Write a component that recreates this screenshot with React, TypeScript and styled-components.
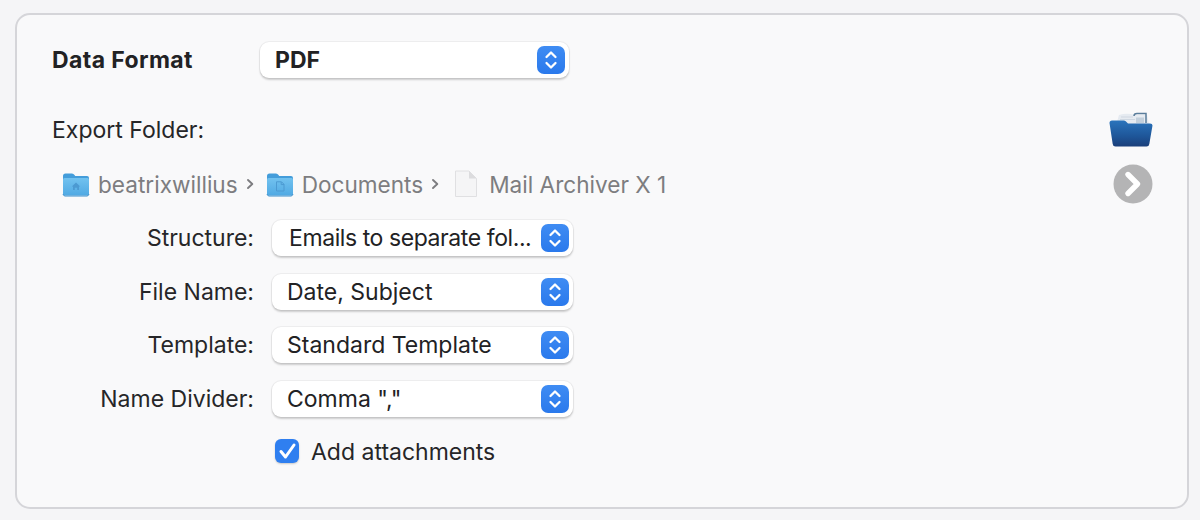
import React from "react";
import styled, { createGlobalStyle } from "styled-components";

const Global = createGlobalStyle`
  html, body { margin: 0; padding: 0; width: 1200px; height: 520px; overflow: hidden; background: #f5f5f7; }
  body { font-family: Inter, "Liberation Sans", sans-serif; -webkit-font-smoothing: antialiased; }
`;

const Page = styled.div`
  width: 1200px;
  height: 520px;
  box-sizing: border-box;
  padding: 13px 11px 11px 15px;
  display: flex;
`;

const Panel = styled.section`
  flex: 1;
  box-sizing: border-box;
  background: #f9f9fa;
  border: 2px solid #d5d5d9;
  border-radius: 15px;
  padding: 27px 34px 0 35px;
  display: flex;
  flex-direction: column;
`;

const TopRow = styled.div`
  display: flex;
  align-items: center;
  height: 36px;
`;

const Heading = styled.div`
  width: 208px;
  font-size: 23px;
  line-height: 34px;
  height: 35px;
  font-weight: 700;
  letter-spacing: 0.4px;
  color: #222224;
`;

const SelectBox = styled.div<{ $width: number; $indent: number; $bold?: boolean; $tight?: boolean }>`
  width: ${(p) => p.$width}px;
  height: 36px;
  box-sizing: border-box;
  padding: 0 4px 0 ${(p) => p.$indent}px;
  display: flex;
  align-items: center;
  justify-content: space-between;
  background: #fff;
  border-radius: 9px;
  box-shadow: 0 0 0 1px rgba(0, 0, 0, 0.04), 0 1.5px 2px rgba(0, 0, 0, 0.18);
  font-size: 23px;
  font-weight: ${(p) => (p.$bold ? 700 : 400)};
  letter-spacing: ${(p) => (p.$tight ? "-0.42px" : "0")};
  color: #222224;
  white-space: nowrap;
`;

const Stepper = styled.span`
  flex: none;
  width: 28px;
  height: 28px;
  border-radius: 7px;
  background: linear-gradient(#3f8cf3, #2a79ec);
  display: flex;
  align-items: center;
  justify-content: center;
`;

const ExportRow = styled.div`
  margin-top: 30px;
  height: 44px;
  display: flex;
  align-items: center;
  justify-content: space-between;
`;

const PlainLabel = styled.div`
  font-size: 23px;
  color: #262628;
`;

const PathRow = styled.div`
  margin-top: 12px;
  height: 40px;
  display: flex;
  align-items: center;
  justify-content: space-between;
`;

const Crumbs = styled.div`
  display: flex;
  align-items: center;
  padding-left: 10px;
  font-size: 22.6px;
  color: #7d7d80;
`;

const CrumbIcon = styled.svg<{ $gap: number }>`
  flex: none;
  margin-right: ${(p) => p.$gap}px;
`;

const Chevron = styled.svg<{ $after: number }>`
  flex: none;
  margin: 0 ${(p) => p.$after}px 0 8px;
`;

const FormGrid = styled.div`
  margin-top: 16px;
  display: grid;
  grid-template-columns: 202px 301px;
  column-gap: 18px;
  row-gap: 17.5px;
  align-items: center;
`;

const FieldLabel = styled.div`
  text-align: right;
  font-size: 23px;
  color: #262628;
`;

const CheckRow = styled.div`
  grid-column: 2;
  display: flex;
  align-items: center;
  gap: 12px;
  padding-left: 3px;
  height: 36px;
  font-size: 23px;
  color: #262628;
`;

const CheckBox = styled.span`
  width: 24px;
  height: 24px;
  margin-top: -3px;
  border-radius: 6px;
  background: #2f7ff0;
  box-shadow: 0 1px 2px rgba(0, 0, 0, 0.2);
  display: flex;
  align-items: center;
  justify-content: center;
`;

const StepperIcon = () => (
  <Stepper>
    <svg width="16" height="22" viewBox="0 0 16 22" fill="none" stroke="#fff" strokeWidth="2.3" strokeLinecap="round" strokeLinejoin="round">
      <path d="M3.5 8 L8 3.5 L12.5 8" />
      <path d="M3.5 14 L8 18.5 L12.5 14" />
    </svg>
  </Stepper>
);

const BlueFolder = ({ glyph }: { glyph: "home" | "doc" }) => (
  <CrumbIcon $gap={8} width="28" height="26" viewBox="0 0 28 26">
    <defs>
      <linearGradient id={`f-${glyph}`} x1="0" y1="0" x2="0" y2="1">
        <stop offset="0" stopColor="#72c2ef" />
        <stop offset="1" stopColor="#50a9e3" />
      </linearGradient>
    </defs>
    <path d="M1 5 Q1 2.5 3.5 2.5 H10 Q11.5 2.5 12.5 4 L13.2 5 H25 Q27 5 27 7 V10 H1 Z" fill="#449dda" />
    <path d="M1 8.5 Q1 7 2.5 7 H25.5 Q27 7 27 8.5 V22.5 Q27 24.5 25 24.5 H3 Q1 24.5 1 22.5 Z" fill={`url(#f-${glyph})`} />
    <path d="M1 23 Q1.5 25 3 25 H25 Q26.5 25 27 23" fill="none" stroke="#3a8fcc" strokeWidth="1" />
    {glyph === "home" ? (
      <path d="M14 11.5 L18.2 15.5 H17 V19 H15.2 V16.8 H12.8 V19 H11 V15.5 H9.8 Z" fill="#4c9ad2" />
    ) : (
      <path d="M10.5 10.8 H15.5 L18 13.3 V20 H10.5 Z M15.2 11 V13.6 H18" fill="none" stroke="#4c9ad2" strokeWidth="1" />
    )}
  </CrumbIcon>
);

const ChevronIcon = ({ after }: { after: number }) => (
  <Chevron $after={after} width="9" height="14" viewBox="0 0 9 14" fill="none" stroke="#7d7d80" strokeWidth="1.9" strokeLinecap="round" strokeLinejoin="round">
    <path d="M2 3 L6.3 7 L2 11" />
  </Chevron>
);

const FileIcon = () => (
  <CrumbIcon $gap={11} width="24" height="28" viewBox="0 0 24 28">
    <path d="M1.5 1 H15 L22.5 8.5 V26.5 H1.5 Z" fill="#f5f5f6" stroke="#e0e0e2" strokeWidth="1" strokeLinejoin="round" />
    <path d="M15 1 V8.5 H22.5 Z" fill="#dcdcde" />
  </CrumbIcon>
);

const OpenFolder = () => (
  <svg width="44" height="36" viewBox="0 0 44 36">
    <defs>
      <linearGradient id="open-f" x1="0" y1="0" x2="0" y2="1">
        <stop offset="0" stopColor="#2a74bc" />
        <stop offset="0.6" stopColor="#1e5699" />
        <stop offset="1" stopColor="#1b3f7a" />
      </linearGradient>
    </defs>
    <path d="M8 10 L10 3 Q18 0.5 26 3 L38 3 L40 12 H8 Z" fill="#e6ebf1" />
    <path d="M12 5 H24 M11 7.5 H26" stroke="#cfd8e2" strokeWidth="1.2" fill="none" />
    <path d="M25 4 Q25 1.5 28 1.5 H37 V11" fill="none" stroke="#5a7d9b" strokeWidth="1.5" />
    <path d="M27 5.5 H35 V11 H27 Z" fill="#c3d0dc" />
    <path d="M0.5 11 Q0.5 8.5 3 8.5 H15 Q16.5 8.5 17.5 10 L19 11.5 H41 Q43.5 11.5 43.5 13.5 L40.3 32 Q40 34.5 37.5 34.5 H6.5 Q4 34.5 3.7 32 Z" fill="url(#open-f)" />
  </svg>
);

const GoButton = () => (
  <svg width="40" height="40" viewBox="0 0 40 40">
    <circle cx="20" cy="20" r="19.5" fill="#b4b4b5" />
    <path d="M15 10.5 L24.5 20 L15 29.5" fill="none" stroke="#fff" strokeWidth="5.4" strokeLinecap="round" strokeLinejoin="round" />
  </svg>
);

const fields = [
  { label: "Structure:", value: "Emails to separate fol...", indent: 17, tight: true },
  { label: "File Name:", value: "Date, Subject", indent: 15, tight: false },
  { label: "Template:", value: "Standard Template", indent: 15, tight: false },
  { label: "Name Divider:", value: 'Comma ","', indent: 15, tight: false },
];

export default function App() {
  return (
    <>
      <Global />
      <Page>
        <Panel>
          <TopRow>
            <Heading>Data Format</Heading>
            <SelectBox $width={309} $indent={15} $bold>
              PDF
              <StepperIcon />
            </SelectBox>
          </TopRow>
          <ExportRow>
            <PlainLabel>Export Folder:</PlainLabel>
            <OpenFolder />
          </ExportRow>
          <PathRow>
            <Crumbs>
              <BlueFolder glyph="home" />
              beatrixwillius
              <ChevronIcon after={11} />
              <BlueFolder glyph="doc" />
              Documents
              <ChevronIcon after={14} />
              <FileIcon />
              Mail Archiver X 1
            </Crumbs>
            <GoButton />
          </PathRow>
          <FormGrid>
            {fields.map((f) => (
              <React.Fragment key={f.label}>
                <FieldLabel>{f.label}</FieldLabel>
                <SelectBox $width={301} $indent={f.indent} $tight={f.tight}>
                  {f.value}
                  <StepperIcon />
                </SelectBox>
              </React.Fragment>
            ))}
            <CheckRow>
              <CheckBox>
                <svg width="19" height="19" viewBox="0 0 19 19" fill="none" stroke="#fff" strokeWidth="3" strokeLinecap="round" strokeLinejoin="round">
                  <path d="M3 10.5 L7.5 16 L16 4" />
                </svg>
              </CheckBox>
              Add attachments
            </CheckRow>
          </FormGrid>
        </Panel>
      </Page>
    </>
  );
}
